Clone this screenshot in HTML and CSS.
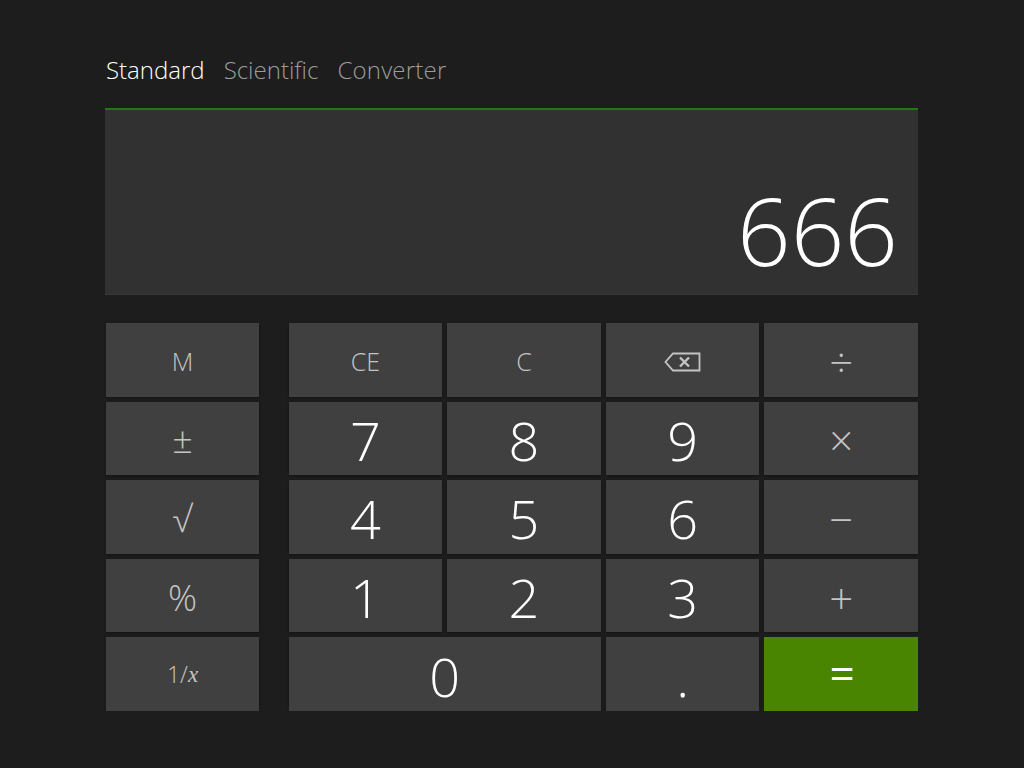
FILE: index.html
```html
<!DOCTYPE html>
<html lang="en">
<head>
    <meta charset="UTF-8">
    <title>Calculator</title>
    <link rel="stylesheet" href="styles.css">
</head>
<body>
    <div class="container">
        <div class="tabs">
            <span class="tab active">Standard</span>
            <span class="tab">Scientific</span>
            <span class="tab converter">Converter</span>
        </div>
        <div class="display">666</div>
        <div class="keypad">
            <div class="memory-keys">
                <button class="small">M</button>
                <button class="op">±</button>
                <button class="op">√</button>
                <button class="op">%</button>
                <button class="small inverse">1/<i>x</i></button>
            </div>
            <div class="main-keys">
                <button class="small">CE</button>
                <button class="small">C</button>
                <button class="op">
                    <svg width="37" height="20" viewBox="0 0 37 20" fill="none" stroke="#c4c4c4" stroke-width="1.8">
                        <path d="M9 1.5H35.5V18.5H9L1.5 10Z"/>
                        <path d="M16 5.5L25 14.5M25 5.5L16 14.5" stroke-width="2.4"/>
                    </svg>
                </button>
                <button class="op math">÷</button>
                <button class="num">7</button>
                <button class="num">8</button>
                <button class="num">9</button>
                <button class="op math">×</button>
                <button class="num">4</button>
                <button class="num">5</button>
                <button class="num">6</button>
                <button class="op math">−</button>
                <button class="num">1</button>
                <button class="num">2</button>
                <button class="num">3</button>
                <button class="op math">+</button>
                <button class="num zero">0</button>
                <button class="num dot">.</button>
                <button class="equals">=</button>
            </div>
        </div>
    </div>
</body>
</html>
```

FILE: styles.css
```css
body {
    margin: 0;
    background: #1d1d1d;
    font-family: "Open Sans", "Noto Sans", sans-serif;
    font-weight: 300;
}
.container {
    width: 813px;
    margin-left: 105px;
}
.tabs {
    display: flex;
    gap: 19px;
    height: 108px;
    padding-top: 53px;
    padding-left: 1px;
    box-sizing: border-box;
    font-size: 24px;
    line-height: 34px;
}
.tab {
    color: #9c9c9c;
}
.tab.active {
    color: #fff;
}
.converter {
    letter-spacing: 0.2px;
}
.display {
    height: 187px;
    box-sizing: border-box;
    padding-right: 20px;
    border-top: 2px solid #1f7a12;
    border-bottom: 1px solid #383838;
    background: #313131;
    color: #fff;
    font-size: 94px;
    line-height: 240px;
    text-align: right;
}
.keypad {
    display: flex;
    gap: 29.5px;
    height: 388px;
    margin-top: 28px;
    padding-left: 1px;
}
.memory-keys {
    display: grid;
    grid-template-rows: repeat(5, minmax(0, 1fr));
    gap: 5px;
    width: 153px;
}
.main-keys {
    flex: 1;
    display: grid;
    grid-template-columns: repeat(4, 1fr);
    grid-template-rows: repeat(5, minmax(0, 1fr));
    gap: 5px;
}
button {
    display: flex;
    align-items: center;
    justify-content: center;
    padding: 4px 0 0;
    border: none;
    border-radius: 0;
    background: #404040;
    color: #c4c4c4;
    font-family: inherit;
    font-weight: 300;
    line-height: 1;
    box-shadow: 0 1px 2px #141414;
}
.small {
    font-size: 25px;
}
.inverse {
    padding-top: 0;
    font-size: 23px;
}
.inverse i {
    font-family: "Liberation Serif", serif;
}
.op {
    font-size: 36px;
}
.math {
    font-size: 42px;
}
.num {
    padding-top: 3px;
    color: #fff;
    font-size: 54px;
}
.zero {
    grid-column: span 2;
}
.equals {
    padding: 0 0 2px 2px;
    background: #4a8500;
    color: #fff;
    font-size: 44px;
    font-weight: 400;
    box-shadow: none;
}
```
